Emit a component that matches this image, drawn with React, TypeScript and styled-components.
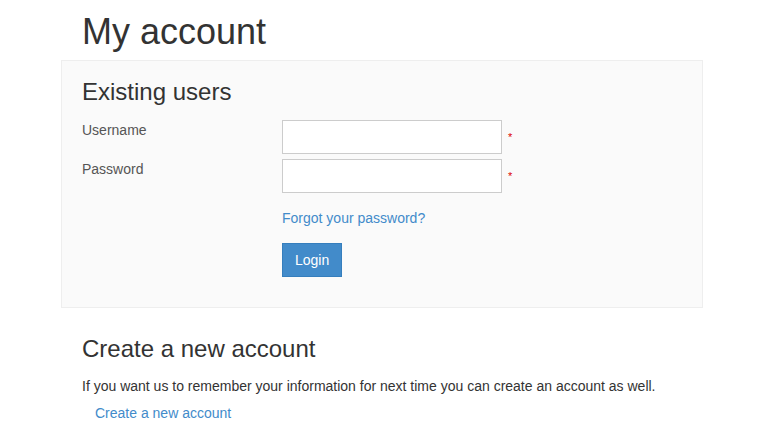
import React from "react";
import styled, { createGlobalStyle } from "styled-components";

const Global = createGlobalStyle`
  html, body { margin: 0; padding: 0; background: #fff; }
  body {
    font-family: "Liberation Sans", Arial, sans-serif;
    font-size: 14px;
    line-height: 20px;
    color: #333;
  }
  * { box-sizing: border-box; }
`;

const Page = styled.div`
  width: 642px;
  margin-left: 61px;
  padding-top: 12px;
`;

const Title = styled.h1`
  margin: 0 0 8px 21px;
  font-size: 36px;
  line-height: 40px;
  font-weight: 400;
  color: #333;
`;

const Panel = styled.div`
  background: #fafafa;
  border: 1px solid #eeeeee;
  padding: 18px 20px 30px 20px;
`;

const SectionTitle = styled.h2`
  margin: 0;
  font-size: 24px;
  line-height: 26px;
  font-weight: 400;
  color: #333;
`;

const Form = styled.form`
  margin-top: 15px;
  display: flex;
  flex-direction: column;
  gap: 5px;
`;

const Row = styled.div`
  display: grid;
  grid-template-columns: 200px 220px auto;
  align-items: start;
`;

const Label = styled.label`
  color: #555;
  font-size: 14px;
  line-height: 20px;
`;

const Input = styled.input`
  width: 220px;
  height: 34px;
  border: 1px solid #cccccc;
  background: #fff;
  padding: 6px 12px;
  font: inherit;
  outline: none;
`;

const Req = styled.span`
  color: #d00;
  font-size: 11px;
  line-height: 11px;
  margin: 12px 0 0 6px;
`;

const Actions = styled.div`
  padding-left: 200px;
  margin-top: 10px;
  display: flex;
  flex-direction: column;
  align-items: flex-start;
  gap: 15px;
`;

const Link = styled.a`
  color: #428bca;
  text-decoration: none;
  font-size: 14px;
  line-height: 20px;
`;

const Button = styled.button`
  background: #428bca;
  border: 1px solid #357ebd;
  color: #fff;
  font: inherit;
  font-size: 14px;
  line-height: 20px;
  padding: 6px 12px;
  height: 34px;
  border-radius: 0;
  cursor: pointer;
`;

const Section = styled.div`
  padding: 28px 0 0 21px;
`;

const Para = styled.p`
  margin: 14px 0 0 0;
  color: #333;
`;

const IndentLink = styled(Link)`
  display: block;
  margin: 7px 0 0 13px;
`;

export default function App() {
  return (
    <>
      <Global />
      <Page>
        <Title>My account</Title>
        <Panel>
          <SectionTitle>Existing users</SectionTitle>
          <Form onSubmit={(e) => e.preventDefault()}>
            <Row>
              <Label htmlFor="u">Username</Label>
              <Input id="u" type="text" />
              <Req>*</Req>
            </Row>
            <Row>
              <Label htmlFor="p">Password</Label>
              <Input id="p" type="password" />
              <Req>*</Req>
            </Row>
            <Actions>
              <Link href="#">Forgot your password?</Link>
              <Button type="submit">Login</Button>
            </Actions>
          </Form>
        </Panel>
        <Section>
          <SectionTitle>Create a new account</SectionTitle>
          <Para>
            If you want us to remember your information for next time you can create an account as well.
          </Para>
          <IndentLink href="#">Create a new account</IndentLink>
        </Section>
      </Page>
    </>
  );
}
